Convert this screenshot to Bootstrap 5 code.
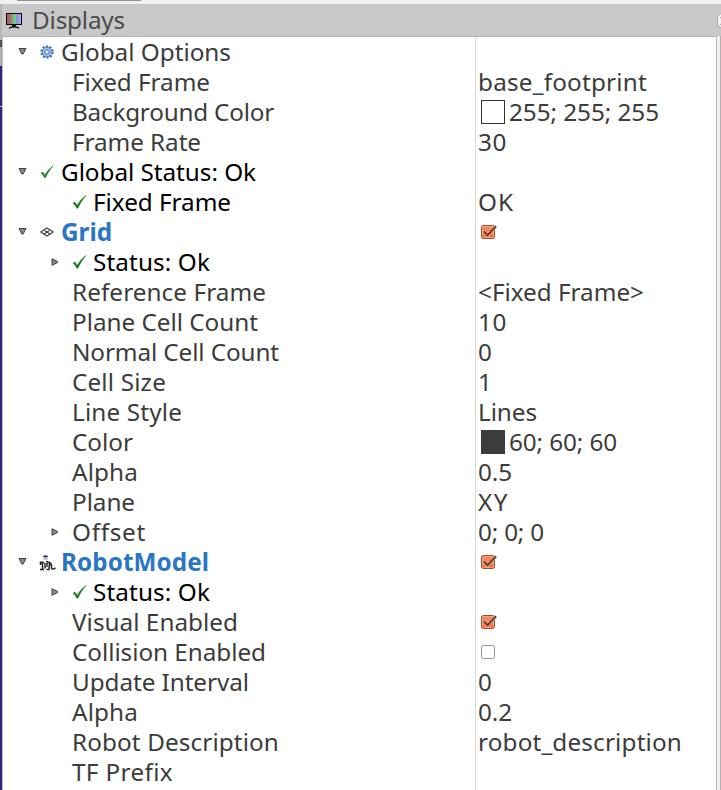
<!DOCTYPE html>
<html lang="en">
<head>
<meta charset="utf-8">
<title>Displays</title>
<link href="https://cdn.jsdelivr.net/npm/bootstrap@5.3.0/dist/css/bootstrap.min.css" rel="stylesheet">
<style>
body{height:790px;overflow:hidden;background:#f2f1f0;font:24.3px/30px "Noto Sans","Open Sans",sans-serif;color:#3c3c3c}
.topstrip{height:4px;padding-left:17px;background:#f2f1f0}
.topstrip div{width:124px;height:1px;background:#989089}
.content{height:786px}
.desk{width:2px;background:linear-gradient(#b9b7b5 0 36px,#55504c 36px 43px,#b0aeac 43px 62px,#33247f 62px 102px,#c5c0c8 102px 103px,#33247f 103px)}
.titlebar{height:32px;background:#c8c8c8;color:#4c4c4c;padding-left:4px}
.titlebar .cap{margin-left:10px}
.closer{width:14px;height:15px;border:1px solid #aaa;border-radius:5px;background:#f5f4f3;margin-right:-10px;flex:none;padding:2px 0 0 2px}
.closer svg{display:block}
.tree{border-left:1px solid #c0bcb8;border-top:1px solid #b8b3ae;border-right:1px solid #bbb8b4;background:#fff;width:715px}
.gutter{background:#f2f0ee;border-right:1px solid #b4b0ac}
.names{width:473px;border-right:1px solid #dadada}
.line{height:30px;display:flex;align-items:center;white-space:nowrap}
.line svg,.titlebar svg{flex:none;display:block}
.t{display:block;flex:none;height:30px}
.top{padding-left:15px}
.top .ic{margin:0 7px 0 12px}
.top .robot{margin:2px 5px 0 11px}
.leaf{padding-left:69px}
.stat{padding-left:47px;color:#000}
.stat .ic{margin:0 6px 0 12px}
.stat.solo{padding-left:57px}
.disp{color:#2a76c6;font-weight:700}
.ok{color:#000}
.vals .line{padding-left:2px}
.swatch{width:24px;height:24px;border:1px solid #333;margin:0 4px 0 3px;flex:none}
.swatch.ink{background:#3c3c3c;border-color:#3c3c3c}
.box{margin-left:2px}
</style>
</head>
<body>
<svg width="0" height="0" class="position-absolute">
<defs>
<linearGradient id="og" x2="0" y2="1"><stop stop-color="#f59169"/><stop offset="1" stop-color="#ee6b3c"/></linearGradient>
<linearGradient id="mon"><stop stop-color="#a85560"/><stop offset=".3" stop-color="#b86d70"/><stop offset=".36" stop-color="#62b573"/><stop offset=".62" stop-color="#80d090"/><stop offset=".68" stop-color="#8888d6"/><stop offset="1" stop-color="#b4b4f4"/></linearGradient>
<symbol id="down" viewBox="0 0 10 10"><path d="M1 1.500H8L5.200 7H3.800Z" fill="#888" stroke="#444" stroke-width="1"/></symbol>
<symbol id="right" viewBox="0 0 10 10"><path d="M2 1.700V8.300L7.500 5.600V4.400Z" fill="#888" stroke="#444" stroke-width="1"/></symbol>
<symbol id="tick" viewBox="0 0 15 14"><path d="M1 8.200L2.900 7 5.200 10.300C7.500 6.300 10.200 3 14 .5 10.500 4.500 8.200 8.300 6 13L4.800 13.200C3.800 11.200 2.700 9.500 1 8.200Z" fill="#1f7a24" stroke="#1f7a24" stroke-width=".5"/></symbol>
<symbol id="on" viewBox="0 0 17 16"><rect x="1.500" y="1.500" width="13" height="13" rx="1.800" fill="url(#og)" stroke="#a84d2d"/><rect x="2.500" y="2.500" width="11" height="11" rx="1" fill="none" stroke="#f8aa88" stroke-width=".8"/><path d="M4 7.500L7.500 11.200 15.600 2.600" fill="none" stroke="#fbb799" stroke-width="3.500"/><path d="M4 7.500L7.500 11.200 16 2.300" fill="none" stroke="#6d3b2c" stroke-width="2.100"/></symbol>
<symbol id="off" viewBox="0 0 17 16"><rect x="1.500" y="1.500" width="13" height="13" rx="2" fill="#fff" stroke="#96928d"/></symbol>
</defs>
</svg>
<div class="topstrip"><div></div></div>
<div class="content d-flex">
 <div class="desk flex-shrink-0"></div>
 <div class="flex-grow-1 d-flex flex-column overflow-hidden">
  <div class="titlebar d-flex align-items-center flex-shrink-0">
   <svg width="16" height="17" viewBox="0 0 16 17"><rect x=".5" y="1.500" width="15" height="11" fill="url(#mon)" stroke="#000"/><path d="M6 13H10V14.500H6Z" fill="#000"/><path d="M3 16.300Q8 13.500 13 16.300" fill="none" stroke="#000" stroke-width="1.300"/></svg>
   <span class="t cap" data-w="93">Displays</span>
   <span class="closer ms-auto"><svg width="9" height="10" viewBox="0 0 9 10"><path d="M1 1L8 9M8 1L1 9" stroke="#555" stroke-width="2"/></svg></span>
  </div>
  <div class="d-flex flex-grow-1">
   <div class="tree d-flex">
    <div class="names flex-shrink-0">
     <div class="line top"><svg width="10" height="10"><use href="#down"/></svg>
      <svg class="ic" width="14" height="14" viewBox="0 0 14 14"><circle cx="7" cy="7" r="5.600" fill="none" stroke="#3669ad" stroke-width="2" stroke-dasharray="2 1.520"/><circle cx="7" cy="7" r="4.800" fill="#a5c4ec" stroke="#3f73b7" stroke-width=".9"/><circle cx="7" cy="7" r="2.300" fill="#dce8f7" stroke="#3f73b7" stroke-width="1"/></svg>
      <span class="t" data-w="170">Global Options</span></div>
     <div class="line leaf"><span class="t" data-w="138">Fixed Frame</span></div>
     <div class="line leaf"><span class="t" data-w="202">Background Color</span></div>
     <div class="line leaf"><span class="t" data-w="129">Frame Rate</span></div>
     <div class="line top ok"><svg width="10" height="10"><use href="#down"/></svg><svg class="ic" width="14" height="14"><use href="#tick"/></svg><span class="t" data-w="195">Global Status: Ok</span></div>
     <div class="line stat solo"><svg class="ic" width="15" height="14"><use href="#tick"/></svg><span class="t" data-w="138">Fixed Frame</span></div>
     <div class="line top disp"><svg width="10" height="10"><use href="#down"/></svg>
      <svg class="ic" width="14" height="10" viewBox="0 0 14 10"><path d="M.7 5L7 1 13.300 5 7 9ZM3.800 3L10.200 7M10.200 3L3.800 7" fill="none" stroke="#444" stroke-width="1.150"/></svg>
      <span class="t" data-w="51">Grid</span></div>
     <div class="line stat"><svg width="10" height="10"><use href="#right"/></svg><svg class="ic" width="15" height="14"><use href="#tick"/></svg><span class="t" data-w="117">Status: Ok</span></div>
     <div class="line leaf"><span class="t" data-w="194">Reference Frame</span></div>
     <div class="line leaf"><span class="t" data-w="186">Plane Cell Count</span></div>
     <div class="line leaf"><span class="t" data-w="207">Normal Cell Count</span></div>
     <div class="line leaf"><span class="t" data-w="94">Cell Size</span></div>
     <div class="line leaf"><span class="t" data-w="110">Line Style</span></div>
     <div class="line leaf"><span class="t" data-w="61">Color</span></div>
     <div class="line leaf"><span class="t" data-w="66">Alpha</span></div>
     <div class="line leaf"><span class="t" data-w="63">Plane</span></div>
     <div class="line stat text-reset"><svg width="10" height="10"><use href="#right"/></svg><span class="t ms-2 ps-1" data-w="74">Offset</span></div>
     <div class="line top disp"><svg width="10" height="10"><use href="#down"/></svg>
      <svg class="ic robot" width="17" height="16" viewBox="0 0 17 16"><path d="M4 1.200Q6.500 -.5 9 1.200V2.200H4Z" fill="#1d3590"/><path d="M4.500 2.700H8.500V4.700H4.500Z" fill="#b5b0ac"/><path d="M1.500 6.500V10M3.500 6.500V14.500M6 8V13.500M1.500 7.500H5M1 14.500H5M7 6.500L10.500 7.500 10 14.500H7.500M8 8V12M10.500 8Q13 8.500 12.500 12T16.500 12.800" fill="none" stroke="#222" stroke-width="1.500"/><path d="M5 10.500H9.500" stroke="#777"/></svg>
      <span class="t" data-w="148">RobotModel</span></div>
     <div class="line stat"><svg width="10" height="10"><use href="#right"/></svg><svg class="ic" width="15" height="14"><use href="#tick"/></svg><span class="t" data-w="117">Status: Ok</span></div>
     <div class="line leaf"><span class="t" data-w="166">Visual Enabled</span></div>
     <div class="line leaf"><span class="t" data-w="194">Collision Enabled</span></div>
     <div class="line leaf"><span class="t" data-w="177">Update Interval</span></div>
     <div class="line leaf"><span class="t" data-w="66">Alpha</span></div>
     <div class="line leaf"><span class="t" data-w="207">Robot Description</span></div>
     <div class="line leaf"><span class="t" data-w="101">TF Prefix</span></div>
    </div>
    <div class="vals">
     <div class="line"></div>
     <div class="line"><span class="t" data-w="169">base_footprint</span></div>
     <div class="line"><span class="swatch"></span><span class="t" data-w="150">255; 255; 255</span></div>
     <div class="line"><span class="t" data-w="29">30</span></div>
     <div class="line"></div>
     <div class="line"><span class="t" data-w="36">OK</span></div>
     <div class="line"><svg class="box" width="17" height="16"><use href="#on"/></svg></div>
     <div class="line"></div>
     <div class="line"><span class="t" data-w="166">&lt;Fixed Frame&gt;</span></div>
     <div class="line"><span class="t" data-w="29">10</span></div>
     <div class="line"><span class="t" data-w="15">0</span></div>
     <div class="line"><span class="t" data-w="15">1</span></div>
     <div class="line"><span class="t" data-w="59">Lines</span></div>
     <div class="line"><span class="swatch ink"></span><span class="t" data-w="108">60; 60; 60</span></div>
     <div class="line"><span class="t" data-w="34">0.5</span></div>
     <div class="line"><span class="t" data-w="31">XY</span></div>
     <div class="line"><span class="t" data-w="66">0; 0; 0</span></div>
     <div class="line"><svg class="box" width="17" height="16"><use href="#on"/></svg></div>
     <div class="line"></div>
     <div class="line"><svg class="box" width="17" height="16"><use href="#on"/></svg></div>
     <div class="line"><svg class="box" width="17" height="16"><use href="#off"/></svg></div>
     <div class="line"><span class="t" data-w="15">0</span></div>
     <div class="line"><span class="t" data-w="34">0.2</span></div>
     <div class="line"><span class="t" data-w="204">robot_description</span></div>
     <div class="line"></div>
    </div>
   </div>
   <div class="gutter flex-grow-1"></div>
  </div>
 </div>
</div>
<script src="https://cdn.jsdelivr.net/npm/bootstrap@5.3.0/dist/js/bootstrap.bundle.min.js"></script>
<script>
document.querySelectorAll('.t').forEach(function(e){
  var range=document.createRange();range.selectNodeContents(e);
  var w=range.getBoundingClientRect().width;
  e.style.letterSpacing=((e.dataset.w-w)/e.textContent.length).toFixed(3)+'px';
});
</script>
</body>
</html>
